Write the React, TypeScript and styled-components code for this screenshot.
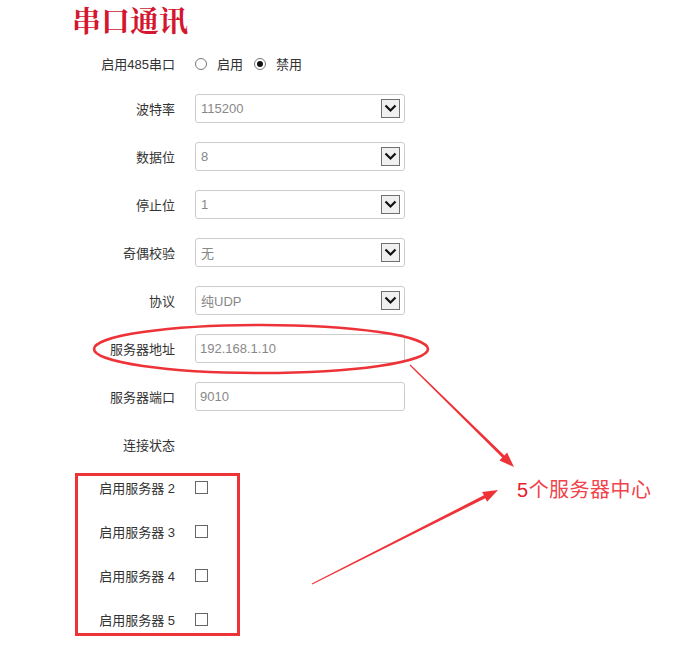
import React from "react";
import styled, { createGlobalStyle } from "styled-components";

const GlobalStyle = createGlobalStyle`
    body {
        margin: 0;
        background: #fff;
        font-family: "Liberation Sans", "Noto Sans CJK SC", sans-serif;
    }
`;

const FIELDS = [
    { label: "波特率", value: "115200", kind: "select" },
    { label: "数据位", value: "8", kind: "select" },
    { label: "停止位", value: "1", kind: "select" },
    { label: "奇偶校验", value: "无", kind: "select" },
    { label: "协议", value: "纯UDP", kind: "select" },
    { label: "服务器地址", value: "192.168.1.10", kind: "input" },
    { label: "服务器端口", value: "9010", kind: "input" },
];

const SERVERS = [2, 3, 4, 5];

// tapered arrow: thin tail, thicker near the head
const arrowPoints = (x1: number, y1: number, x2: number, y2: number) => {
    const dx = x2 - x1;
    const dy = y2 - y1;
    const len = Math.hypot(dx, dy);
    const ux = dx / len;
    const uy = dy / len;
    const nx = -uy;
    const ny = ux;
    const bx = x2 - 15 * ux;
    const by = y2 - 15 * uy;
    const p = (x: number, y: number, w: number) => `${(x + w * nx).toFixed(1)},${(y + w * ny).toFixed(1)}`;
    return [
        p(x1, y1, 0.5),
        p(bx, by, 1.6),
        p(bx, by, 5.5),
        `${x2},${y2}`,
        p(bx, by, -5.5),
        p(bx, by, -1.6),
        p(x1, y1, -0.5),
    ].join(" ");
};

export default function App() {
    return (
        <Page>
            <GlobalStyle />
            <Title>串口通讯</Title>
            <Form>
                <Row $height={41}>
                    <Label>启用485串口</Label>
                    <RadioGroup>
                        <Radio />
                        <RadioText>启用</RadioText>
                        <Radio $checked />
                        <RadioText>禁用</RadioText>
                    </RadioGroup>
                </Row>
                {FIELDS.map((f) => (
                    <Row key={f.label} $height={48}>
                        <Label>{f.label}</Label>
                        {f.kind === "select" ? (
                            <SelectBox>
                                <SelectValue>{f.value}</SelectValue>
                                <ArrowBox>
                                    <svg width="13" height="9" viewBox="0 0 13 9">
                                        <path d="M1.5 1.5 L6.5 6.5 L11.5 1.5" fill="none" stroke="#111" strokeWidth="2.2" />
                                    </svg>
                                </ArrowBox>
                            </SelectBox>
                        ) : (
                            <TextInput defaultValue={f.value} />
                        )}
                    </Row>
                ))}
                <Row $height={48}>
                    <Label>连接状态</Label>
                </Row>
                <ServerGroup>
                    {SERVERS.map((n) => (
                        <CheckRow key={n}>
                            <CheckLabel>启用服务器 {n}</CheckLabel>
                            <CheckBox />
                        </CheckRow>
                    ))}
                </ServerGroup>
            </Form>

            <Overlay width="694" height="645" viewBox="0 0 694 645">
                <ellipse cx="261" cy="349" rx="167" ry="24" fill="none" stroke="#ee3338" strokeWidth="2.6" />
                <polygon points={arrowPoints(410, 365, 514, 467)} fill="#ee3338" />
                <polygon points={arrowPoints(312, 584, 498, 490)} fill="#ee3338" />
            </Overlay>
            <Note>
                <NoteNum>5</NoteNum>个服务器中心
            </Note>
        </Page>
    );
}

const Page = styled.div`
    position: relative;
    width: 694px;
    height: 645px;
    overflow: hidden;
    background: #fff;
`;

const Title = styled.h1`
    margin: 0;
    height: 43px;
    padding-left: 72px;
    font-family: "Noto Serif CJK SC", "Noto Sans CJK SC", serif;
    font-size: 29px;
    line-height: 39px;
    font-weight: 700;
    color: #d4162f;
`;

const Form = styled.div`
    display: flex;
    flex-direction: column;
`;

const Row = styled.div<{ $height: number }>`
    display: flex;
    align-items: center;
    height: ${(p) => p.$height}px;
`;

const Label = styled.div`
    width: 175px;
    text-align: right;
    font-size: 13px;
    color: #333;
`;

const RadioGroup = styled.div`
    display: flex;
    align-items: center;
    margin-left: 20px;
`;

const Radio = styled.span<{ $checked?: boolean }>`
    display: inline-flex;
    align-items: center;
    justify-content: center;
    box-sizing: border-box;
    width: 12px;
    height: 12px;
    border: 1px solid #777;
    border-radius: 50%;
    margin-right: 10px;

    &::after {
        content: "";
        display: ${(p) => (p.$checked ? "block" : "none")};
        width: 6px;
        height: 6px;
        border-radius: 50%;
        background: #111;
    }
`;

const RadioText = styled.span`
    font-size: 13px;
    color: #333;
    margin-right: 11px;
`;

const SelectBox = styled.div`
    display: flex;
    align-items: center;
    box-sizing: border-box;
    width: 210px;
    height: 29px;
    margin-left: 20px;
    padding: 0 4px 0 5px;
    border: 1px solid #ccc;
    border-radius: 3px;
    background: #fff;
`;

const SelectValue = styled.span`
    flex: 1;
    font-size: 13px;
    color: #888;
`;

const ArrowBox = styled.span`
    display: flex;
    align-items: center;
    justify-content: center;
    box-sizing: border-box;
    width: 19px;
    height: 19px;
    border: 1px solid #707070;
    background: #f0f0f0;
`;

const TextInput = styled.input`
    box-sizing: border-box;
    width: 210px;
    height: 29px;
    margin: 0 0 0 20px;
    padding: 0 4px;
    border: 1px solid #ccc;
    border-radius: 3px;
    font-family: "Liberation Sans", "Noto Sans CJK SC", sans-serif;
    font-size: 13px;
    color: #888;
    outline: none;
`;

const ServerGroup = styled.div`
    display: flex;
    flex-direction: column;
    gap: 22px;
    box-sizing: border-box;
    width: 165px;
    margin: 5px 0 0 75px;
    padding-bottom: 3px;
    border: 3px solid #ee3338;
`;

const CheckRow = styled.div`
    display: flex;
    align-items: center;
    height: 22px;
`;

const CheckLabel = styled.div`
    width: 97px;
    text-align: right;
    font-size: 13px;
    color: #333;
`;

const CheckBox = styled.span`
    box-sizing: border-box;
    width: 13px;
    height: 13px;
    margin-left: 20px;
    border: 1px solid #666;
    background: #fff;
`;

const Overlay = styled.svg`
    position: absolute;
    left: 0;
    top: 0;
    pointer-events: none;
`;

const Note = styled.div`
    position: absolute;
    left: 517px;
    top: 478px;
    font-family: "Liberation Sans", "Noto Sans CJK SC", sans-serif;
    font-size: 20px;
    line-height: 24px;
    letter-spacing: 0.5px;
    color: #f0434c;
`;

const NoteNum = styled.span`
    color: #e8202c;
`;
